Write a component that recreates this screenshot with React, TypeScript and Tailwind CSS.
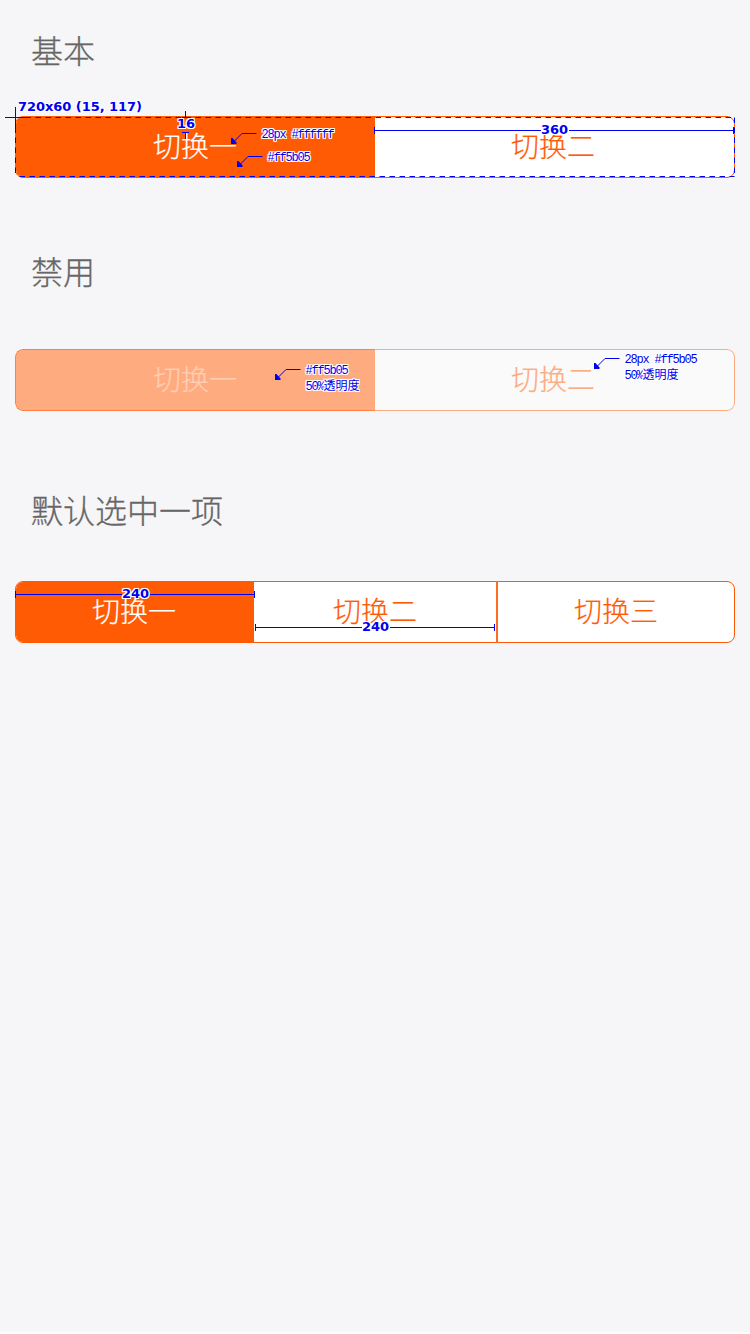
import React from "react";

const cjk = "font-['Noto_Sans_CJK_SC',sans-serif] font-light";
const halo =
  "[text-shadow:1px_0_#fff,-1px_0_#fff,0_1px_#fff,0_-1px_#fff,1px_1px_#fff,-1px_-1px_#fff,1px_-1px_#fff,-1px_1px_#fff]";
const measure = `absolute whitespace-pre font-['DejaVu_Sans',sans-serif] text-[13px] leading-4 font-bold text-[#0000f0] ${halo}`;
const note = `absolute whitespace-pre font-['Liberation_Mono','Noto_Sans_CJK_SC',monospace] text-[12px] leading-[15px] tracking-[-1.2px] text-[#0000f0] ${halo}`;

function Heading({ children, className }: { children: React.ReactNode; className: string }) {
  return (
    <h2 className={`${cjk} pl-[31px] text-[32px] leading-[48px] text-[#666] [-webkit-text-stroke:0.3px_#666] ${className}`}>
      {children}
    </h2>
  );
}

function Segment({ children, className }: { children: React.ReactNode; className: string }) {
  return (
    <button className={`${cjk} flex text-[28px] leading-[42px] [-webkit-text-stroke:0.2px_currentColor] ${className}`}>
      {children}
    </button>
  );
}

function Leader({ x, y }: { x: number; y: number }) {
  return (
    <g transform={`translate(${x} ${y})`}>
      <path d="M25.5 0.5H11L3 8.5" />
      <path d="M0 5V11H5.5V9.5L1.5 5Z" fill="#0000f0" stroke="none" />
    </g>
  );
}

export default function App() {
  return (
    <div className="h-[1334px] w-[750px] bg-white">
      <main className="relative flex h-[1332px] w-[750px] flex-col overflow-hidden bg-[#f6f6f9]">
        <Heading className="h-[116px] pt-[25px]">基本</Heading>
        <div className="mx-[15px] flex h-[62px] shrink-0 overflow-hidden rounded-[8px] border border-[#ff5b05] bg-white">
          <Segment className="w-[359px] bg-[#ff5b05] pt-[7px] pl-[137px] text-white">切换一</Segment>
          <Segment className="flex-1 pt-[7px] pl-[136px] text-[#ff5b05]">切换二</Segment>
        </div>

        <Heading className="h-[171px] pt-[68px]">禁用</Heading>
        <div className="mx-[15px] flex h-[62px] shrink-0 overflow-hidden rounded-[8px] bg-[#fafafb]">
          <Segment className="w-[360px] rounded-l-[8px] border border-r-0 border-[#fe8343] bg-[#ffab80] pt-[7px] pl-[137px] text-[#ffcfb4]">切换一</Segment>
          <Segment className="flex-1 rounded-r-[8px] border border-l-0 border-[#fdab80] pt-[7px] pl-[136px] text-[#fdab80]">切换二</Segment>
        </div>

        <Heading className="h-[170px] pt-[74px]">默认选中一项</Heading>
        <div className="mx-[15px] flex h-[62px] shrink-0 rounded-[8px] border border-[#ff5b05] bg-white">
          <Segment className="w-[238px] rounded-l-[7px] bg-[#ff5b05] pt-[7px] pl-[76px] text-white">切换一</Segment>
          <Segment className="-my-px w-[244px] border-r-2 border-[#fd6e24] pt-[8px] pl-[79px] text-[#ff5b05]">切换二</Segment>
          <Segment className="flex-1 pt-[7px] pl-[76px] text-[#ff5b05]">切换三</Segment>
        </div>

        <svg className="pointer-events-none absolute inset-0" width="750" height="1332" fill="none" stroke="#0000f0" strokeWidth="1">
          <path d="M15.5 117.5H734.5" strokeDasharray="5.5 4.5" />
          <path d="M15.5 176.5H734.5" strokeDasharray="5.5 4.5" strokeDashoffset="6" />
          <path d="M15.5 117.5V176.5M734.5 117.5V176.5" strokeDasharray="5.5 4.5" />
          <path d="M5 117.5H28M15.5 107V128" />
          <path d="M185.5 111V117M182 117.5H189M182 132.5H189M185.5 133V139" />
          <path d="M374.5 127V134M733.5 127V134M375 130.5H541M569 130.5H733" />
          <path d="M15.5 591V598M254.5 591V598M16 594.5H122M150 594.5H254" />
          <path d="M255.5 624V631M494.5 624V631M256 627.5H362M390 627.5H494" />
          <Leader x={231} y={133} />
          <Leader x={237} y={156} />
          <Leader x={275} y={369} />
          <Leader x={594} y={358} />
        </svg>

        <span className={`${measure} top-[99px] left-[18px] tracking-[-0.05px]`}>720x60 (15, 117)</span>
        <span className={`${measure} top-[116px] left-[177px]`}>16</span>
        <span className={`${measure} top-[122px] left-[541px]`}>360</span>
        <span className={`${measure} top-[586px] left-[122px]`}>240</span>
        <span className={`${measure} top-[619px] left-[362px]`}>240</span>
        <span className={`${note} top-[128px] left-[261.5px]`}>28px #ffffff</span>
        <span className={`${note} top-[151px] left-[267.5px]`}>#ff5b05</span>
        <span className={`${note} top-[364px] left-[305.5px]`}>#ff5b05</span>
        <span className={`${note} top-[380px] left-[305.5px]`}>50%<span className="tracking-normal">透明度</span></span>
        <span className={`${note} top-[353px] left-[624.5px]`}>28px #ff5b05</span>
        <span className={`${note} top-[369px] left-[624.5px]`}>50%<span className="tracking-normal">透明度</span></span>
      </main>
    </div>
  );
}
